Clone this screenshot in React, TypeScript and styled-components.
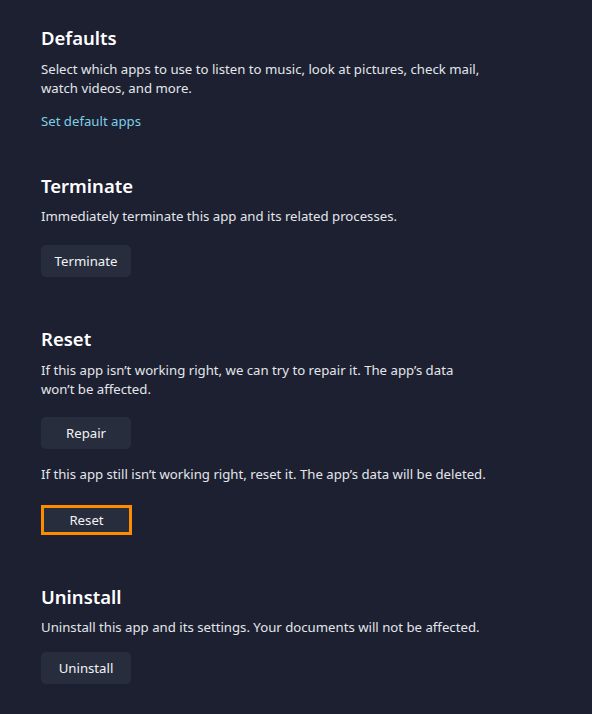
import React from "react"
import styled, { createGlobalStyle } from "styled-components"

const GlobalStyle = createGlobalStyle`
    html, body {
        margin: 0;
        padding: 0;
        background-color: #1c2031;
    }
`

const Page = styled.div`
    background-color: #1c2031;
    font-family: 'Noto Sans', 'Open Sans', sans-serif;
    color: #e4e6ea;
    width: 592px;
    height: 714px;
    box-sizing: border-box;
    padding: 24px 0 0 41px;
    overflow: hidden;
`
const Section = styled.section<{ $gap: number }>`
    display: flex;
    flex-direction: column;
    align-items: flex-start;
    margin-bottom: ${(p) => p.$gap}px;
`
const Heading = styled.h2`
    margin: 0;
    font-size: 18.5px;
    font-weight: 600;
    line-height: 28px;
    color: #ffffff;
`
const Description = styled.p<{ $top: number; $after: number }>`
    margin: ${(p) => p.$top}px 0 ${(p) => p.$after}px 0;
    font-size: 13.2px;
    line-height: 19px;
`
const Link = styled.a`
    font-size: 13.2px;
    line-height: 19px;
    color: #7fcfe6;
    text-decoration: none;
`
const Button = styled.button<{ $focused?: boolean }>`
    width: ${(p) => (p.$focused ? 91 : 90)}px;
    height: ${(p) => (p.$focused ? 30 : 32)}px;
    box-sizing: border-box;
    border-radius: ${(p) => (p.$focused ? 0 : 5)}px;
    border: ${(p) => (p.$focused ? "3px solid #ff8c00" : "none")};
    background-color: #282d3d;
    color: #f2f3f5;
    font-family: inherit;
    font-size: 13.2px;
    padding: 0;
`

export default function App() {
    return (
        <>
            <GlobalStyle />
            <Page>
                <Section $gap={40.5}>
                    <Heading>Defaults</Heading>
                    <Description $top={7.5} $after={14.5}>
                        Select which apps to use to listen to music, look at pictures, check mail,
                        <br />
                        watch videos, and more.
                    </Description>
                    <Link href="#">Set default apps</Link>
                </Section>
                <Section $gap={48}>
                    <Heading>Terminate</Heading>
                    <Description $top={7} $after={19.5}>
                        Immediately terminate this app and its related processes.
                    </Description>
                    <Button>Terminate</Button>
                </Section>
                <Section $gap={48}>
                    <Heading>Reset</Heading>
                    <Description $top={7.5} $after={18.5}>
                        If this app isn’t working right, we can try to repair it. The app’s data
                        <br />
                        won’t be affected.
                    </Description>
                    <Button>Repair</Button>
                    <Description $top={16} $after={21}>
                        If this app still isn’t working right, reset it. The app’s data will be deleted.
                    </Description>
                    <Button $focused>Reset</Button>
                </Section>
                <Section $gap={0}>
                    <Heading>Uninstall</Heading>
                    <Description $top={7} $after={15}>
                        Uninstall this app and its settings. Your documents will not be affected.
                    </Description>
                    <Button>Uninstall</Button>
                </Section>
            </Page>
        </>
    )
}
